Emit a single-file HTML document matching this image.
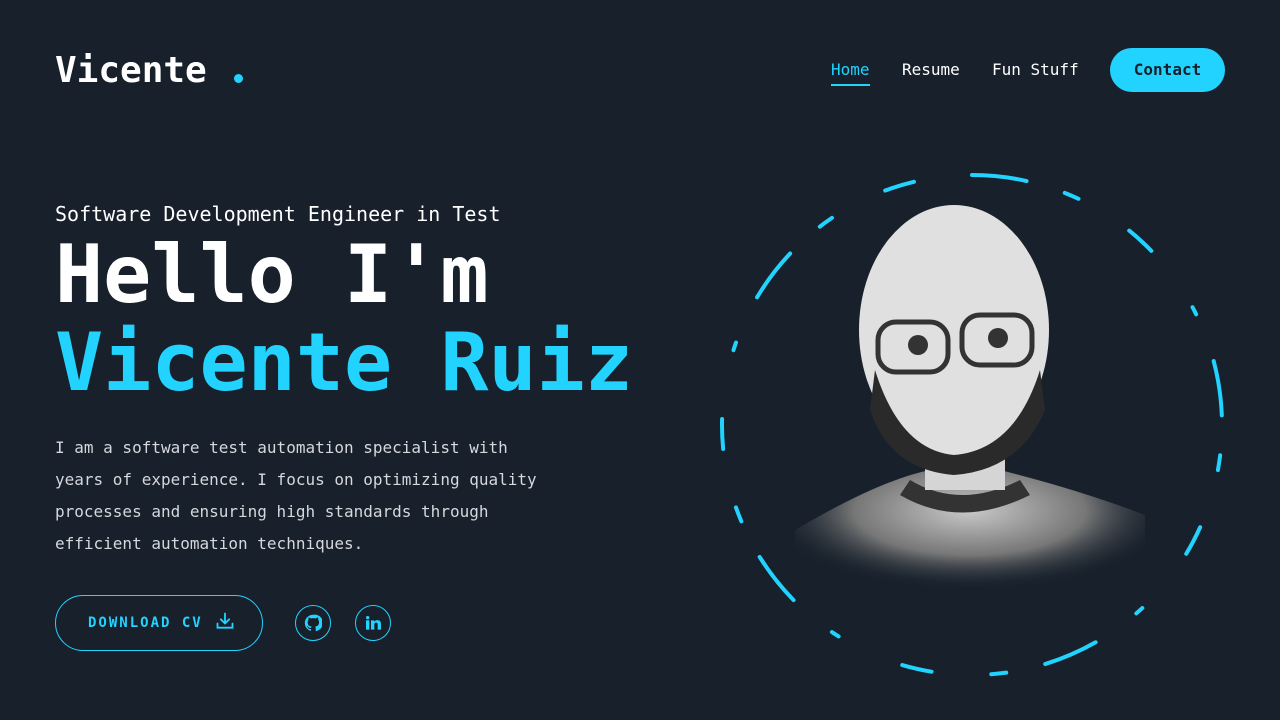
<!DOCTYPE html>
<html><head><meta charset="utf-8"><style>
*{margin:0;padding:0;box-sizing:border-box}
body{width:1280px;height:720px;background:#17202b;font-family:"DejaVu Sans Mono","Liberation Mono",monospace;color:#fff;position:relative;overflow:hidden}
.logo{position:absolute;left:55px;top:50px;font-size:36px;font-weight:600;letter-spacing:0}
.dot{position:absolute;left:234px;top:74px;width:9px;height:9px;border-radius:50%;background:#22d3ff}
.nav a{position:absolute;top:60px;font-size:16px;color:#fff;text-decoration:none}
.contact{position:absolute;left:1110px;top:48px;width:115px;height:44px;border-radius:22px;background:#22d3ff;color:#17202b;font-size:16px;font-weight:bold;text-align:center;line-height:44px}
.sub{position:absolute;left:55px;top:202px;font-size:20px}
.h1{position:absolute;left:55px;top:230px;font-size:80px;font-weight:bold;line-height:90px}
.h2{position:absolute;left:55px;top:318px;font-size:80px;font-weight:bold;line-height:90px;color:#22d3ff}
.p{position:absolute;left:55px;top:432px;width:495px;font-size:16px;line-height:32px;color:#d5d8dc}
.btn{position:absolute;left:55px;top:595px;width:208px;height:56px;border:1px solid #22d3ff;border-radius:28px;color:#22d3ff;font-size:14px;font-weight:bold;letter-spacing:2px;padding-left:32px;line-height:54px}
.ic{position:absolute;top:605px;width:36px;height:36px;border:1px solid #22d3ff;border-radius:50%;display:flex;align-items:center;justify-content:center}
</style></head><body>
<div class="logo">Vicente</div><div class="dot"></div>
<div class="nav"><a style="left:831px;color:#22d3ff;border-bottom:2px solid #22d3ff;padding-bottom:5px">Home</a><a style="left:902px">Resume</a><a style="left:992px">Fun Stuff</a></div>
<div class="contact">Contact</div>
<div class="sub">Software Development Engineer in Test</div>
<div class="h1">Hello I'm</div>
<div class="h2">Vicente Ruiz</div>
<div class="p">I am a software test automation specialist with years of experience. I focus on optimizing quality processes and ensuring high standards through efficient automation techniques.</div>
<div class="btn">DOWNLOAD CV <svg style="vertical-align:-4px;margin-left:2px" width="20" height="20" viewBox="0 0 24 24" fill="none" stroke="#22d3ff" stroke-width="2.2" stroke-linecap="round"><path d="M12 3v12M7 10l5 5 5-5M3 15v5h18v-5"/></svg></div>
<div class="ic" style="left:295px"><svg width="18" height="18" viewBox="0 0 24 24" fill="#22d3ff"><path d="M12 1a11 11 0 0 0-3.5 21.4c.6.1.8-.2.8-.5v-2c-3.2.7-3.8-1.4-3.8-1.4-.5-1.3-1.3-1.7-1.3-1.7-1-.7.1-.7.1-.7 1.2.1 1.8 1.200 1.8 1.2 1 1.8 2.800 1.300 3.400 1 .1-.8.4-1.3.7-1.6-2.600-.3-5.300-1.300-5.300-5.700 0-1.300.5-2.300 1.200-3.100-.1-.3-.5-1.500.1-3.100 0 0 1-.3 3.300 1.200a11 11 0 0 1 6 0c2.300-1.500 3.300-1.200 3.300-1.200.6 1.600.2 2.800.1 3.100.8.800 1.200 1.800 1.200 3.100 0 4.400-2.700 5.400-5.300 5.700.4.400.8 1.100.8 2.200v3.300c0 .3.2.7.8.5A11 11 0 0 0 12 1z"/></svg></div>
<div class="ic" style="left:355px"><svg width="16" height="16" viewBox="0 0 24 24" fill="#22d3ff"><circle cx="4" cy="4" r="2.5"/><rect x="1.5" y="8" width="5" height="14"/><path d="M9 8h4.8v2c.7-1.300 2.400-2.400 4.700-2.400 4.500 0 5.500 2.800 5.500 6.600V22h-5v-7c0-1.700 0-3.600-2.300-3.600S14 13.100 14 15v7H9z"/></svg></div>
<svg style="position:absolute;left:700px;top:150px" width="560" height="560" viewBox="0 0 560 560">
<defs><radialGradient id="g" cx="50%" cy="30%" r="60%"><stop offset="0" stop-color="#c8c8c8"/><stop offset=".55" stop-color="#777"/><stop offset="1" stop-color="#17202b" stop-opacity="0"/></radialGradient></defs>
<circle cx="272" cy="425" r="0"/>
<circle cx="272" cy="275" r="250" fill="none" stroke="#22d3ff" stroke-width="4" stroke-linecap="round" stroke-dasharray="55 40 15 60 30 70 8 50" transform="rotate(-90 272 275)"/>
<path d="M95 380 Q180 330 230 320 L300 320 Q380 340 445 365 L445 430 Q270 480 95 430Z" fill="url(#g)"/>
<path d="M200 345 Q260 380 330 345 L320 330 Q260 360 210 330Z" fill="#333"/>
<rect x="225" y="270" width="80" height="70" fill="#d5d5d5"/>
<ellipse cx="254" cy="180" rx="95" ry="125" fill="#e0e0e0"/>
<path d="M175 220 Q200 300 254 305 Q315 300 340 220 L345 260 Q320 320 254 325 Q190 320 170 260Z" fill="#2a2a2a"/>
<rect x="178" y="172" width="70" height="50" rx="18" fill="none" stroke="#333" stroke-width="5"/>
<rect x="262" y="165" width="70" height="50" rx="18" fill="none" stroke="#333" stroke-width="5"/>
<circle cx="218" cy="195" r="10" fill="#333"/><circle cx="298" cy="188" r="10" fill="#333"/>
</svg>
</body></html>
